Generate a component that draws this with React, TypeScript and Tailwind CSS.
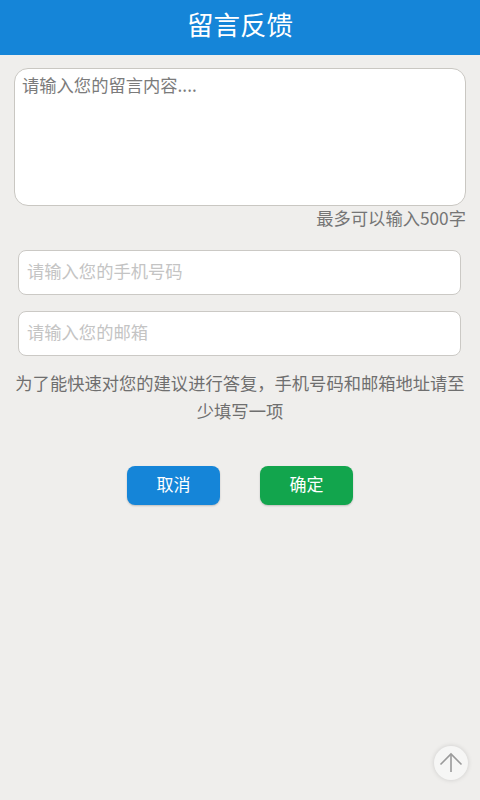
const cjk = { fontFamily: '"Noto Sans CJK SC", "Noto Sans", sans-serif' }

export default function App() {
  return (
    <div className="relative h-[800px] w-[480px] overflow-hidden bg-[#efeeec]" style={cjk}>
      <header className="flex h-[55px] justify-center bg-[#1585d8]">
        <h1 className="text-[26.5px] leading-[47px] font-normal text-white">留言反馈</h1>
      </header>

      <div className="px-[14px] pt-[13px]">
        <div className="h-[138px] rounded-[14px] border border-[#c9c7c2] bg-white px-[7px] py-[2px] text-[17.3px] leading-[27px] text-[#7b7b7b]">
          请输入您的留言内容....
        </div>
        <p className="text-right text-[17.3px] leading-[24px] text-[#757575]">最多可以输入500字</p>
      </div>

      <div className="flex flex-col gap-[16px] pt-[20px] pr-[19px] pl-[18px]">
        <div className="h-[45px] rounded-[8px] border border-[#cbc9c5] bg-white px-[8px] text-[17.3px] leading-[40px] text-[#c4c4c4]">
          请输入您的手机号码
        </div>
        <div className="h-[45px] rounded-[8px] border border-[#cbc9c5] bg-white px-[8px] text-[17.3px] leading-[40px] text-[#c4c4c4]">
          请输入您的邮箱
        </div>
      </div>

      <p className="px-[14px] pt-[13px] text-center text-[17.3px] leading-[28px] text-[#6f6f6f]">
        为了能快速对您的建议进行答复，手机号码和邮箱地址请至少填写一项
      </p>

      <div className="flex justify-center gap-[40px] pt-[41px]">
        <button className="h-[39px] w-[93px] rounded-[8px] bg-[#1585d8] pb-[3px] text-[17px] text-white shadow-[0_1px_2px_rgba(0,0,0,0.2)]">取消</button>
        <button className="h-[39px] w-[93px] rounded-[8px] bg-[#12a54d] pb-[3px] text-[17px] text-white shadow-[0_1px_2px_rgba(0,0,0,0.2)]">确定</button>
      </div>

      <button className="absolute top-[746px] left-[434px] flex h-[34px] w-[34px] items-center justify-center rounded-full bg-[#f6f6f5] shadow-[0_0_5px_rgba(0,0,0,0.14)]">
        <svg width="24" height="24" viewBox="0 0 24 24" fill="none" stroke="#9a9a9a" strokeWidth="1.6">
          <path d="M12 21V3" />
          <path d="M1.500 13.500 12 3l10.500 10.500" />
        </svg>
      </button>
    </div>
  )
}
